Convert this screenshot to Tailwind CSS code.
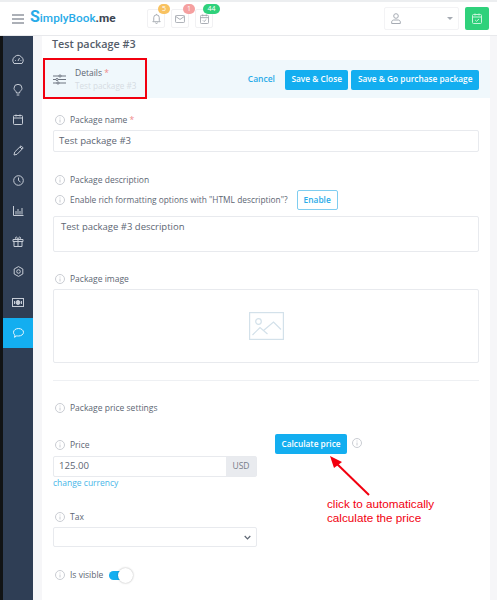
<!DOCTYPE html>
<html lang="en">
<head>
  <meta charset="UTF-8" />
  <title>Test package #3</title>
  <script src="https://cdn.jsdelivr.net/npm/@tailwindcss/browser@4"></script>
</head>
<body class="bg-white">
<div class="relative w-[497px] h-[600px] overflow-hidden font-['Open_Sans',sans-serif] text-[#5d6673]">

  <!-- header -->
  <header class="h-[36px] bg-white border-t-2 border-t-[#eceef0] border-b border-b-[#e8e9ec] flex items-center pl-[12px] pr-[8px]">
    <svg class="w-[12px] h-[10px] mr-[6px]" viewBox="0 0 12 10" fill="none" stroke="#5a6270" stroke-width="1.2"><path d="M0 1h12M0 5h12M0 9h12"/></svg>
    <div class="w-[86px] flex items-baseline font-['Roboto',sans-serif] text-[11.800px] font-medium whitespace-nowrap">
      <span class="text-[#29abe8] font-bold text-[16px] leading-none">S</span><span class="text-[#29abe8]">implyBook</span><span class="text-[#3b4350] font-bold">.me</span>
    </div>
    <div class="flex gap-[6px] ml-[31px]">
      <div class="relative w-[18px] h-[19px] border border-[#f1f1f3] rounded-[2px] flex items-center justify-center">
        <span class="absolute -top-[6px] left-[10px] w-[12px] h-[10px] rounded-full bg-[#f8c261] text-white text-[7px] flex items-center justify-center">5</span>
        <svg class="w-[11px] h-[11px]" viewBox="0 0 12 12" fill="none" stroke="#a0a5ad"><path d="M2 9.500h8L9 8V5a3 3 0 0 0-6 0v3zM5 10.500a1 1 0 0 0 2 0M6 1v1"/></svg>
      </div>
      <div class="relative w-[18px] h-[19px] border border-[#f1f1f3] rounded-[2px] flex items-center justify-center">
        <span class="absolute -top-[6px] left-[11px] w-[12px] h-[10px] rounded-full bg-[#f5a0a0] text-white text-[7px] flex items-center justify-center">1</span>
        <svg class="w-[10px] h-[8px]" viewBox="0 0 11 9" fill="none" stroke="#a0a5ad"><rect x=".5" y=".5" width="10" height="8" rx="1"/><path d="M.5 1.500l5 3.500 5-3.500"/></svg>
      </div>
      <div class="relative w-[18px] h-[19px] border border-[#f1f1f3] rounded-[2px] flex items-center justify-center">
        <span class="absolute -top-[6px] left-[7px] w-[17px] h-[10px] rounded-full bg-[#2fd17b] text-white text-[7px] flex items-center justify-center">44</span>
        <svg class="w-[9px] h-[10px]" viewBox="0 0 10 11" fill="none" stroke="#a0a5ad"><rect x=".5" y="1.500" width="9" height="9" rx="1"/><path d="M.5 4h9M3 .5v2M7 .5v2M3.200 7l1.300 1.300L7 6"/></svg>
      </div>
    </div>
    <div class="ml-auto w-[75px] h-[23px] border border-[#f3f3f5] rounded-[2px] flex items-center pl-[6px] pr-[5px] justify-between">
      <svg class="w-[10px] h-[11px]" viewBox="0 0 10 11" fill="none" stroke="#a6abb3"><circle cx="5" cy="3" r="2.300"/><path d="M.7 10.500V9c0-1.200 1-2 2-2h4.600c1 0 2 .8 2 2v1.500z"/></svg>
      <span class="w-0 h-0 border-x-[3px] border-x-transparent border-t-[3px] border-t-[#a6abb3]"></span>
    </div>
    <div class="ml-[6px] w-[24px] h-[23px] rounded-[2px] bg-[#2fd17b] flex items-center justify-center">
      <svg class="w-[10px] h-[11px]" viewBox="0 0 10 11" fill="none" stroke="#c9f4dc"><rect x=".5" y="1.500" width="9" height="9" rx="1"/><path d="M.5 4h9M3 .5v2M7 .5v2M3.200 7l1.300 1.300L7 6"/></svg>
    </div>
  </header>

  <div class="flex h-[564px]">
    <!-- sidebar -->
    <aside class="w-[33px] border-l-[3px] border-[#111315] bg-[#2f3e55] pt-[8px] flex flex-col shrink-0">
      <div class="h-[30.4px] flex items-center justify-center"><svg class="w-[12px] h-[11px]" viewBox="0 0 12 11" fill="none" stroke="#c6ccd6"><path d="M2 9.500a5 5 0 1 1 8 0zM6 7l1.500-3M3 6.500h.8M8.500 6.500h.8"/></svg></div>
      <div class="h-[30.4px] flex items-center justify-center"><svg class="w-[10px] h-[12px]" viewBox="0 0 10 12" fill="none" stroke="#c6ccd6"><path d="M3.500 9C3.500 7 1 6.500 1 4.300a4 4 0 0 1 8 0C9 6.500 6.500 7 6.500 9zM3.700 11h2.600"/></svg></div>
      <div class="h-[30.4px] flex items-center justify-center"><svg class="w-[10px] h-[11px]" viewBox="0 0 10 11" fill="none" stroke="#c6ccd6"><rect x=".5" y="1.500" width="9" height="9" rx="1"/><path d="M.5 4h9M3 .5v2M7 .5v2"/></svg></div>
      <div class="h-[30.4px] flex items-center justify-center"><svg class="w-[11px] h-[11px]" viewBox="0 0 11 11" fill="none" stroke="#c6ccd6"><path d="M1 10l.7-3L8 .8l2.200 2.200L4 9.300zM7 2l2 2"/></svg></div>
      <div class="h-[30.4px] flex items-center justify-center"><svg class="w-[11px] h-[11px]" viewBox="0 0 11 11" fill="none" stroke="#c6ccd6"><circle cx="5.500" cy="5.500" r="4.800"/><path d="M5.500 2.500v3l2 1.500"/></svg></div>
      <div class="h-[30.4px] flex items-center justify-center"><svg class="w-[11px] h-[10px]" viewBox="0 0 11 10" fill="none" stroke="#c6ccd6"><path d="M.5 0v9.500h10M3 8.500V5M5 8.500V3M7 8.500V5M9 8.500V2"/></svg></div>
      <div class="h-[30.4px] flex items-center justify-center"><svg class="w-[12px] h-[11px]" viewBox="0 0 12 11" fill="none" stroke="#c6ccd6"><path d="M1 5.500V3.500h10v2zM2 5.500v5h8v-5M6 3.500v7M6 3.500C4 3.500 3 2.500 3.500 1.500S5.500 1 6 3.500C6.500 1 8 .5 8.500 1.500S8 3.500 6 3.500"/></svg></div>
      <div class="h-[30.4px] flex items-center justify-center"><svg class="w-[11px] h-[11px]" viewBox="0 0 11 11" fill="none" stroke="#c6ccd6"><path d="M5.500.6l4.300 2.400v5l-4.300 2.400L1.200 8V3z"/><circle cx="5.500" cy="5.500" r="1.800"/></svg></div>
      <div class="h-[30.4px] flex items-center justify-center"><svg class="w-[12px] h-[9px]" viewBox="0 0 12 9" fill="none" stroke="#c6ccd6"><rect x=".5" y=".5" width="11" height="8"/><circle cx="6" cy="4.500" r="2" fill="#c6ccd6"/><path d="M2.500 3v3M9.500 3v3"/></svg></div>
      <div class="h-[30.4px] bg-[#13aef0] flex items-center justify-center"><svg class="w-[11px] h-[10px]" viewBox="0 0 11 10" fill="none" stroke="#e8f7fe"><path d="M5.500.5c2.800 0 5 1.700 5 3.800S8.300 8 5.500 8c-.6 0-1.200 0-1.700-.2L1.500 9.300l.5-2.200C1 6.400.5 5.400.5 4.300.5 2.200 2.700.5 5.500.5z"/></svg></div>
    </aside>

    <!-- main -->
    <main class="flex-1 bg-[#f6f6f8] pl-[9px] pr-[7px] min-w-0">
      <div class="bg-white h-full">
        <h1 class="h-[24px] pl-[10px] text-[10.800px] font-semibold leading-[15px] text-[#545c69]">Test package #3</h1>
        <div class="h-[38px] bg-[#f0f8fc] flex items-center pl-[11px] pr-[11px] pt-[1px]">
          <svg class="w-[13px] h-[11px] mr-[9px]" viewBox="0 0 13 11" fill="none" stroke="#6d7480"><path d="M0 2h13M0 5.500h13M0 9h13"/><circle cx="7" cy="2" r="1.100" fill="#f0f8fc"/><circle cx="4" cy="5.500" r="1.100" fill="#f0f8fc"/><circle cx="5" cy="9" r="1.100" fill="#f0f8fc"/></svg>
          <div class="leading-[12px]">
            <div class="text-[8.500px] text-[#5d6673]">Details <span class="text-[#f08a8a]">*</span></div>
            <div class="text-[8.200px] text-[#d6dce3] mt-[1px]">Test package #3</div>
          </div>
          <span class="ml-auto text-[8.500px] font-semibold text-[#29abe8]">Cancel</span>
          <span class="ml-[10px] h-[20px] px-[6.500px] rounded-[2px] bg-[#13aef0] text-white text-[8.300px] font-semibold flex items-center">Save &amp; Close</span>
          <span class="ml-[3px] h-[20px] px-[6.500px] rounded-[2px] bg-[#13aef0] text-white text-[8.300px] font-semibold flex items-center">Save &amp; Go purchase package</span>
        </div>

        <div class="pl-[11px] pr-[11px] pt-[15px]">
          <div class="flex items-center h-[14px] text-[8.500px]">
            <svg class="ml-[2px] w-[10px] h-[10px] mr-[5px]" viewBox="0 0 10 10" fill="none" stroke="#c9ccd2"><circle cx="5" cy="5" r="4.500"/><path d="M5 4.500v3M5 2.500v1"/></svg>
            Package name&nbsp;<span class="text-[#f08a8a]">*</span>
          </div>
          <div class="mt-[3px] h-[22px] border border-[#e8eaee] rounded-[2px] flex items-center pl-[5px] text-[9.600px] text-[#5d6673]">Test package #3</div>

          <div class="mt-[21px] flex items-center h-[14px] text-[8.500px]">
            <svg class="ml-[2px] w-[10px] h-[10px] mr-[5px]" viewBox="0 0 10 10" fill="none" stroke="#c9ccd2"><circle cx="5" cy="5" r="4.500"/><path d="M5 4.500v3M5 2.500v1"/></svg>
            Package description
          </div>
          <div class="mt-[3px] flex items-center h-[20px] text-[8.350px]">
            <svg class="ml-[2px] w-[10px] h-[10px] mr-[5px]" viewBox="0 0 10 10" fill="none" stroke="#c9ccd2"><circle cx="5" cy="5" r="4.500"/><path d="M5 4.500v3M5 2.500v1"/></svg>
            Enable rich formatting options with "HTML description"?
            <span class="ml-[9px] h-[20px] w-[41px] border border-[#7fcdf0] rounded-[2px] flex items-center justify-center font-semibold text-[#29abe8]">Enable</span>
          </div>
          <div class="mt-[6px] h-[36px] border border-[#e8eaee] rounded-[2px] pl-[7px] pt-[3px] text-[9.500px] leading-[14px] text-[#5d6673]">Test package #3 description</div>

          <div class="mt-[20px] flex items-center h-[14px] text-[8.500px]">
            <svg class="ml-[2px] w-[10px] h-[10px] mr-[5px]" viewBox="0 0 10 10" fill="none" stroke="#c9ccd2"><circle cx="5" cy="5" r="4.500"/><path d="M5 4.500v3M5 2.500v1"/></svg>
            Package image
          </div>
          <div class="mt-[3px] h-[74px] border border-[#e8eaee] rounded-[2px] flex items-center justify-center">
            <svg class="w-[35px] h-[28px]" viewBox="0 0 35 28" fill="none" stroke="#d3e1ea" stroke-width="1.200"><rect x=".6" y=".6" width="33.800" height="26.800"/><circle cx="9.500" cy="9.500" r="2.800"/><path d="M3.500 23L11 15.500l7.500 6.500M14.500 18.500L24.500 10l7.500 7.500"/></svg>
          </div>
          <div class="mt-[17px] h-px bg-[#eef0f3]"></div>

          <div class="mt-[20px] flex items-center h-[14px] text-[8.500px]">
            <svg class="ml-[2px] w-[10px] h-[10px] mr-[5px]" viewBox="0 0 10 10" fill="none" stroke="#c9ccd2"><circle cx="5" cy="5" r="4.500"/><path d="M5 4.500v3M5 2.500v1"/></svg>
            Package price settings
          </div>

          <div class="mt-[23px] flex">
            <div class="w-[204px]">
              <div class="flex items-center h-[14px] text-[8.500px]">
                <svg class="ml-[2px] w-[10px] h-[10px] mr-[5px]" viewBox="0 0 10 10" fill="none" stroke="#c9ccd2"><circle cx="5" cy="5" r="4.500"/><path d="M5 4.500v3M5 2.500v1"/></svg>
                Price
              </div>
              <div class="mt-[4px] h-[21px] border border-[#e8eaee] rounded-[2px] flex text-[9.600px]">
                <span class="flex-1 flex items-center pl-[5px]">125.00</span>
                <span class="w-[30px] bg-[#e9ebef] flex items-center justify-center text-[8.500px] text-[#767d88]">USD</span>
              </div>
              <div class="text-[8.500px] leading-[12px] text-[#48b6e8]">change currency</div>

              <div class="mt-[21px] flex items-center h-[14px] text-[8.500px]">
                <svg class="ml-[2px] w-[10px] h-[10px] mr-[5px]" viewBox="0 0 10 10" fill="none" stroke="#c9ccd2"><circle cx="5" cy="5" r="4.500"/><path d="M5 4.500v3M5 2.500v1"/></svg>
                Tax
              </div>
              <div class="mt-[3px] h-[20px] border border-[#e8eaee] rounded-[2px] flex items-center justify-end pr-[5px]">
                <svg class="w-[7px] h-[5px]" viewBox="0 0 7 5" fill="none" stroke="#5d6673" stroke-width="1.200"><path d="M.7 1l2.800 2.800L6.300 1"/></svg>
              </div>

              <div class="mt-[18px] flex items-center h-[20px] text-[8.500px]">
                <svg class="ml-[2px] w-[10px] h-[10px] mr-[5px]" viewBox="0 0 10 10" fill="none" stroke="#c9ccd2"><circle cx="5" cy="5" r="4.500"/><path d="M5 4.500v3M5 2.500v1"/></svg>
                Is visible
                <span class="relative ml-[6px] w-[19px] h-[9px] rounded-full bg-[#13aef0]">
                  <span class="absolute -right-[5px] -top-[3px] w-[15px] h-[15px] rounded-full bg-white shadow-[0_0_2px_rgba(0,0,0,0.35)]"></span>
                </span>
              </div>
            </div>
            <div class="ml-[18px] -mt-[4px] flex items-start">
              <span class="h-[20px] w-[72px] rounded-[2px] bg-[#13aef0] text-white text-[8.300px] font-semibold flex items-center justify-center">Calculate price</span>
              <svg class="ml-[5px] mt-[4px] w-[10px] h-[10px]" viewBox="0 0 10 10" fill="none" stroke="#c9ccd2"><circle cx="5" cy="5" r="4.500"/><path d="M5 4.500v3M5 2.500v1"/></svg>
            </div>
          </div>
        </div>
      </div>
    </main>
  </div>

  <!-- screenshot annotations -->
  <div class="absolute left-[43px] top-[58px] w-[104px] h-[41px] border-2 border-[#f2000f]"></div>
  <svg class="absolute left-[325px] top-[453px] w-[50px] h-[46px]" viewBox="0 0 50 46" fill="none">
    <path d="M44 42L10 9" stroke="#f2000f" stroke-width="2"/>
    <path d="M5 3l12 6-8 6z" fill="#f2000f"/>
  </svg>
  <div class="absolute left-[327px] top-[497px] font-['Liberation_Sans',sans-serif] text-[11.700px] leading-[14px] text-[#f2000f]">click to automatically<br>calculate the price</div>
</div>
</body>
</html>
